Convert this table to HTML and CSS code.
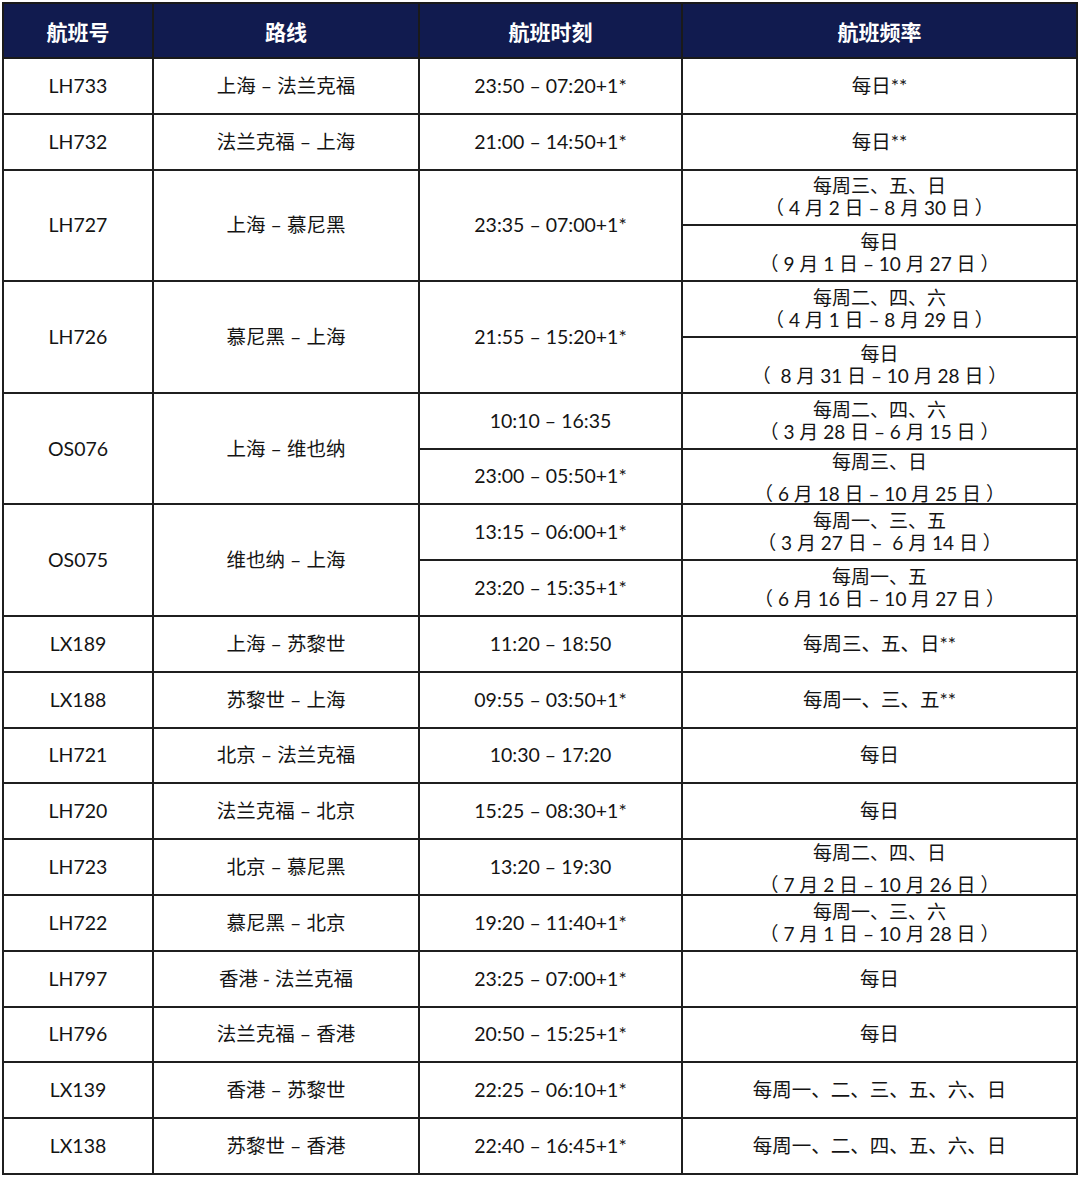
FILE: index.html
```html
<!DOCTYPE html>
<html lang="zh-CN">
<head>
<meta charset="utf-8">
<link rel="stylesheet" href="styles.css">
</head>
<body>
<table class="sched">
  <colgroup>
    <col class="c1"><col class="c2"><col class="c3"><col class="c4">
  </colgroup>
  <thead>
    <tr><th>航班号</th><th>路线</th><th>航班时刻</th><th>航班频率</th></tr>
  </thead>
  <tbody>
    <tr><td>LH733</td><td>上海 – 法兰克福</td><td>23:50 – 07:20+1*</td><td>每日**</td></tr>
    <tr><td>LH732</td><td>法兰克福 – 上海</td><td>21:00 – 14:50+1*</td><td>每日**</td></tr>
    <tr><td rowspan="2">LH727</td><td rowspan="2">上海 – 慕尼黑</td><td rowspan="2">23:35 – 07:00+1*</td><td class="two"><span>每周三、五、日</span><span>（ 4 月 2 日 – 8 月 30 日 ）</span></td></tr>
    <tr><td class="two"><span>每日</span><span>（ 9 月 1 日 – 10 月 27 日 ）</span></td></tr>
    <tr><td rowspan="2">LH726</td><td rowspan="2">慕尼黑 – 上海</td><td rowspan="2">21:55 – 15:20+1*</td><td class="two"><span>每周二、四、六</span><span>（ 4 月 1 日 – 8 月 29 日 ）</span></td></tr>
    <tr><td class="two"><span>每日</span><span>（&nbsp; 8 月 31 日 – 10 月 28 日 ）</span></td></tr>
    <tr><td rowspan="2">OS076</td><td rowspan="2">上海 – 维也纳</td><td>10:10 – 16:35</td><td class="two"><span>每周二、四、六</span><span>（ 3 月 28 日 – 6 月 15 日 ）</span></td></tr>
    <tr><td>23:00 – 05:50+1*</td><td class="two wide"><span>每周三、日</span><span>（ 6 月 18 日 – 10 月 25 日 ）</span></td></tr>
    <tr><td rowspan="2">OS075</td><td rowspan="2">维也纳 – 上海</td><td>13:15 – 06:00+1*</td><td class="two"><span>每周一、三、五</span><span>（ 3 月 27 日 –&nbsp; 6 月 14 日 ）</span></td></tr>
    <tr><td>23:20 – 15:35+1*</td><td class="two"><span>每周一、五</span><span>（ 6 月 16 日 – 10 月 27 日 ）</span></td></tr>
    <tr><td>LX189</td><td>上海 – 苏黎世</td><td>11:20 – 18:50</td><td>每周三、五、日**</td></tr>
    <tr><td>LX188</td><td>苏黎世 – 上海</td><td>09:55 – 03:50+1*</td><td>每周一、三、五**</td></tr>
    <tr><td>LH721</td><td>北京 – 法兰克福</td><td>10:30 – 17:20</td><td>每日</td></tr>
    <tr><td>LH720</td><td>法兰克福 – 北京</td><td>15:25 – 08:30+1*</td><td>每日</td></tr>
    <tr><td>LH723</td><td>北京 – 慕尼黑</td><td>13:20 – 19:30</td><td class="two wide"><span>每周二、四、日</span><span>（ 7 月 2 日 – 10 月 26 日 ）</span></td></tr>
    <tr><td>LH722</td><td>慕尼黑 – 北京</td><td>19:20 – 11:40+1*</td><td class="two"><span>每周一、三、六</span><span>（ 7 月 1 日 – 10 月 28 日 ）</span></td></tr>
    <tr><td>LH797</td><td>香港 - 法兰克福</td><td>23:25 – 07:00+1*</td><td>每日</td></tr>
    <tr><td>LH796</td><td>法兰克福 – 香港</td><td>20:50 – 15:25+1*</td><td>每日</td></tr>
    <tr><td>LX139</td><td>香港 – 苏黎世</td><td>22:25 – 06:10+1*</td><td>每周一、二、三、五、六、日</td></tr>
    <tr><td>LX138</td><td>苏黎世 – 香港</td><td>22:40 – 16:45+1*</td><td>每周一、二、四、五、六、日</td></tr>
  </tbody>
</table>
</body>
</html>
```

FILE: styles.css
```css
html, body {
  margin: 0;
  padding: 0;
  background: #ffffff;
}
body {
  padding: 2px 4px 0 2px;
  font-family: "Lato", "Noto Sans CJK SC", sans-serif;
  color: #141414;
}
.sched {
  border-collapse: collapse;
  width: 1074px;
  table-layout: fixed;
}
.c1 { width: 150px; }
.c2 { width: 266px; }
.c3 { width: 263px; }
.c4 { width: 395px; }
.sched th {
  background: #111b4f;
  color: #ffffff;
  font-family: "Noto Sans CJK SC", sans-serif;
  font-weight: 700;
  font-size: 21px;
  height: 53px;
  padding: 0;
  border: 2px solid #1a1a1a;
  text-align: center;
  vertical-align: middle;
}
.sched td {
  height: 53.8px;
  padding: 0;
  border: 2px solid #1f1f1f;
  text-align: center;
  vertical-align: middle;
  font-size: 19.5px;
  line-height: 22px;
}
.sched td.two {
  font-size: 19px;
}
.two span {
  display: block;
  line-height: 22px;
}
.two.wide span:first-child {
  margin-bottom: 10px;
  margin-top: -8px;
}
.two.wide span:last-child {
  margin-bottom: -12px;
}
```
